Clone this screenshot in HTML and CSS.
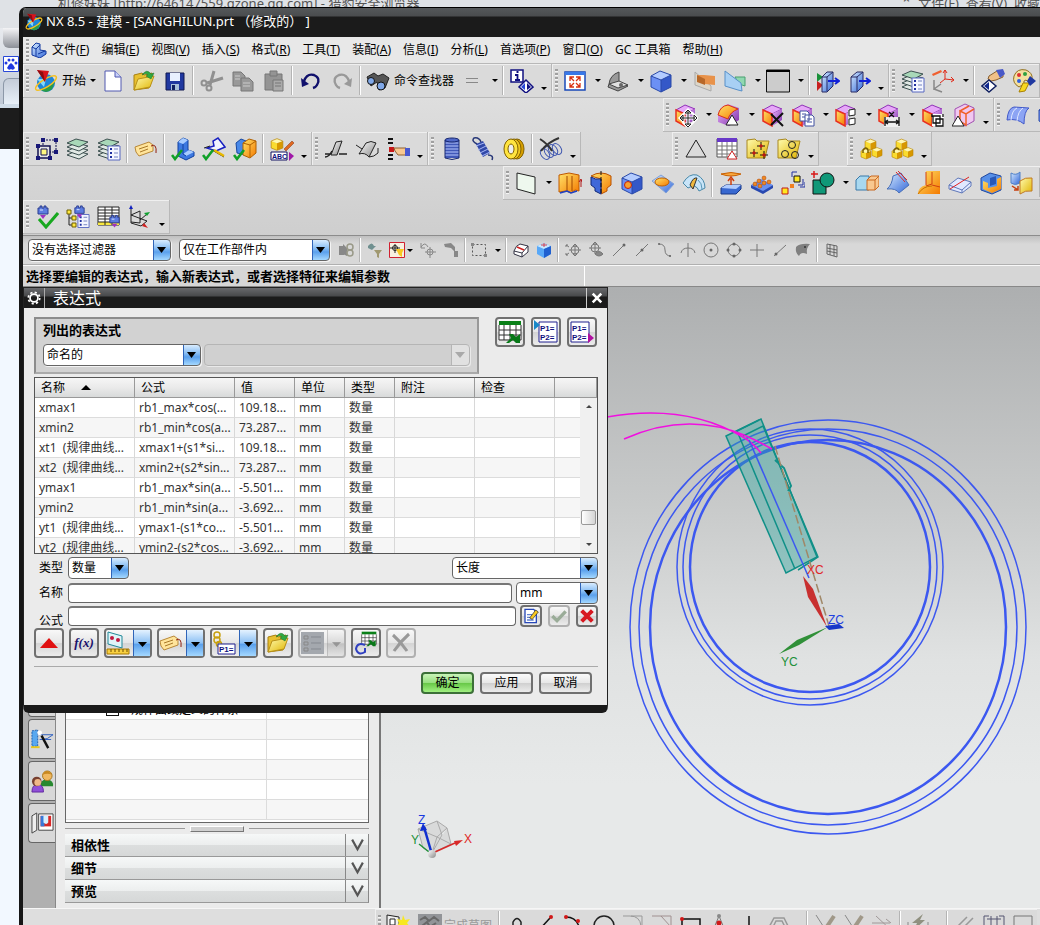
FILE: index.html
```
<!DOCTYPE html>
<html lang="zh-CN">
<head>
  <meta charset="utf-8">
  <title>NX 8.5 - 建模</title>
  <link rel="stylesheet" href="styles.css">
</head>
<body>

<!-- shared icon parts -->
<svg class="defs" width="0" height="0">
  <defs>
    <linearGradient id="gY" x2="1" y2="1"><stop stop-color="#fffbb0"/><stop offset="1" stop-color="#e0b400"/></linearGradient>
    <linearGradient id="gB" x2="1" y2="1"><stop stop-color="#d8ecff"/><stop offset="1" stop-color="#3468d8"/></linearGradient>
    <linearGradient id="gO" x2="1" y2="1"><stop stop-color="#ffe36a"/><stop offset="1" stop-color="#f47a00"/></linearGradient>
    <linearGradient id="gP" x2="1" y2="1"><stop stop-color="#f0b8ff"/><stop offset="1" stop-color="#7a2ca8"/></linearGradient>
    <linearGradient id="gG" x2="1" y2="1"><stop stop-color="#fff"/><stop offset="1" stop-color="#888"/></linearGradient>
    <symbol id="logo" viewBox="0 0 24 24">
      <circle cx="12" cy="14" r="9" fill="#1c86d8"/>
      <path d="M6 20q6 6 12 0l3-7q-6 6-15 7z" fill="#2a9c48"/>
      <path d="M3 10l7 8 2-8z" fill="#80d8ff"/>
      <ellipse cx="12" cy="14" rx="12" ry="4" transform="rotate(-32 12 14)" fill="none" stroke="#f4c020" stroke-width="1.500"/>
      <path d="M3 1l12 1-4 11z" fill="#d8141c"/><path d="M3 1l8 12-2-10z" fill="#8c0c10"/>
    </symbol>
    <symbol id="cube" viewBox="0 0 24 24">
      <path d="M2 7l9-5 10 4-10 5z" fill="#e6a8f8" stroke="#9030b8"/>
      <path d="M11 11l10-5v11l-10 6z" fill="url(#gP)"/>
      <path d="M2 7l9 4v12l-9-5z" fill="url(#gO)" stroke="#e83020" stroke-width="1.500"/>
    </symbol>
    <symbol id="box" viewBox="0 0 24 24">
      <path d="M2 7l9-5 11 4-10 5z" fill="#b4ccff"/><path d="M2 7l10 4v12l-10-5z" fill="#6c90f4"/><path d="M12 11l10-5v12l-10 5z" fill="#3458c8"/>
      <path d="M2 7l9-5 11 4v12l-10 5-10-5zl10 4v12M12 11l10-5" stroke="#2848a8" fill="none"/>
    </symbol>
    <symbol id="ybox" viewBox="0 0 12 12">
      <path d="M1 3l5-2 5 2-5 2z" fill="#fff8b0"/><path d="M1 3l5 2v6l-5-2z" fill="#fadc30"/><path d="M6 5l5-2v6l-5 2z" fill="#d89800"/>
      <path d="M1 3l5-2 5 2v6l-5 2-5-2z" stroke="#b88400" stroke-width=".6" fill="none"/>
    </symbol>
    <symbol id="layers" viewBox="0 0 24 24">
      <g fill="#e0e8e4" stroke="#3c5050"><path d="M1 18l9-4 12 3-9 5z"/><path d="M1 14l9-4 12 3-9 5z"/><path d="M1 10l9-4 12 3-9 5z"/><path d="M1 6l9-4 12 3-9 5z" fill="#a8d8b8"/></g>
    </symbol>
    <symbol id="list" viewBox="0 0 14 16">
      <path d="M1 1h12v14h-12z" fill="#f4f6ff" stroke="#5868c0"/><path d="M3 4h2M3 8h2M3 12h2" stroke="#2030a0" stroke-width="2"/><path d="M7 4h4M7 8h4M7 12h4" stroke="#7080c0"/>
    </symbol>
    <symbol id="tag" viewBox="0 0 24 24">
      <path d="M1 10l14-5 4 3v6l-14 5-3-4z" fill="#ffe49a" stroke="#b88838"/><path d="M5 12l9-3M6 15l8-3" stroke="#a87828"/><path d="M17 9q6-3 5 7" fill="none" stroke="#902010"/>
    </symbol>
    <symbol id="folder" viewBox="0 0 24 24">
      <path d="M2 21V6l8-2 2 2 8-2v5l-3 10z" fill="#e8c030" stroke="#a88010"/><path d="M2 21l4-11 16-3-4 11z" fill="url(#gY)" stroke="#b89018"/><path d="M10 6q5-7 9-1l3-1-3 6-5-3 2-1q-2-3-6 0z" fill="#30a840" stroke="#187028" stroke-width=".5"/>
    </symbol>
    <symbol id="check" viewBox="0 0 12 12"><path d="M1 6l3 4 7-9" stroke="#10a028" stroke-width="2.600" fill="none"/></symbol>
    <symbol id="camera" viewBox="0 0 14 14"><path d="M2 3h2v-2h2v2h2v-2h2v2h2v6h-10z" fill="#5c7ce0" stroke="#2a3c90"/><path d="M4 10h6l-3 4z" fill="#a030c0"/><path d="M4 5h3" stroke="#d8e4ff"/></symbol>
    <symbol id="grid" viewBox="0 0 24 24"><path d="M1 1h22v18h-22z" fill="#fff"/><path d="M1 1h22v4h-22z" fill="#0a8018"/><path d="M1 5v15h22v-15M1 10h22M1 15h22M6 5v15M12 5v15M18 5v15" stroke="#333" fill="none"/><path d="M11 14h4l3 3 4-3v9h-4l-3-3-4 3h-3l5-5z" fill="#087818"/></symbol>
    <symbol id="xbig" viewBox="0 0 24 24"><path d="M4 4q8 7 14 16M20 3q-8 7-15 17" stroke="currentColor" stroke-width="3" fill="none"/></symbol>
  </defs>
</svg>

<!-- browser window behind NX -->
<div class="browser">
  <div class="browser-title"><span>机修妹妹 [http://646147559.qzone.qq.com] - 猎豹安全浏览器</span><span class="browser-menu">⌃&nbsp; 文件(F)&nbsp; 查看(V)&nbsp; 收藏</span></div>
  <div class="browser-side">
    <div class="side-avatar"></div>
    <svg class="paw" viewBox="0 0 16 16"><path d="M.5.5h15v15H.5z" fill="#fff" stroke="#2848d8"/><path d="M8 7q3 2 4 5-2 3-4 1-2 2-4-1 1-3 4-5z" fill="#2038e0"/><circle cx="3" cy="7" r="1.500" fill="#2038e0"/><circle cx="6" cy="4" r="1.500" fill="#2038e0"/><circle cx="10" cy="4" r="1.500" fill="#2038e0"/><circle cx="13" cy="7" r="1.500" fill="#2038e0"/></svg>
    <div class="side-tab"></div>
    <div class="side-black"></div>
  </div>
</div>

<div class="nx">
  <header class="titlebar"><svg class="logo"><use href="#logo"/></svg><h1>NX 8.5 - 建模 - [SANGHILUN.prt （修改的） ]</h1></header>

  <nav class="menubar">
    <i class="grip"></i>
    <svg class="menu-logo" viewBox="0 0 16 16"><path d="M1 5l4-4 4 1v6l6 1v3l-6 4-8-3z" fill="url(#gB)" stroke="#1238a0"/><path d="M1 5l4 2v7M5 7l4-4M7 12l7-3" stroke="#1238a0" fill="none"/></svg>
    <a href="#">文件(<u>F</u>)</a><a href="#">编辑(<u>E</u>)</a><a href="#">视图(<u>V</u>)</a><a href="#">插入(<u>S</u>)</a><a href="#">格式(<u>R</u>)</a><a href="#">工具(<u>T</u>)</a><a href="#">装配(<u>A</u>)</a><a href="#">信息(<u>I</u>)</a><a href="#">分析(<u>L</u>)</a><a href="#">首选项(<u>P</u>)</a><a href="#">窗口(<u>O</u>)</a><a href="#">GC 工具箱</a><a href="#">帮助(<u>H</u>)</a>
  </nav>

  <div class="row">
    <div class="toolbar">
      <i class="grip"></i>
      <button class="tool text drop start"><svg><use href="#logo"/></svg>开始</button>
      <button class="tool" aria-label="新建"><svg viewBox="0 0 24 24"><path d="M4 2h10l6 6v14H4z" fill="#fff" stroke="#5058b0"/><path d="M14 2v6h6" fill="#c8d0f8" stroke="#5058b0"/></svg></button>
      <button class="tool" aria-label="打开"><svg><use href="#folder"/></svg></button>
      <button class="tool" aria-label="保存"><svg viewBox="0 0 24 24"><path d="M3 4h18v17H3z" fill="#2038a0" stroke="#101850"/><path d="M7 4h10v8H7z" fill="#e8f0ff"/><path d="M8 15h8v6H8z" fill="#a8c0d8"/><path d="M9 16h3v5H9z" fill="#102060"/></svg></button>
      <i class="sep"></i>
      <button class="tool" aria-label="剪切"><svg viewBox="0 0 24 24" stroke="#909090" stroke-width="2"><path d="M14 2l-4 14M23 9L7 14" stroke-width="3"/><circle cx="9" cy="19" r="2.500"/><circle cx="4" cy="14" r="2.500"/></svg></button>
      <button class="tool" aria-label="复制"><svg viewBox="0 0 24 24"><g fill="#999" stroke="#777"><path d="M2 3h8l4 4v10H2z"/><path d="M10 9h8l4 4v9H10z"/><path d="M4 7h5M4 10h5M12 14h7M12 17h7" stroke="#ccc"/></g></svg></button>
      <button class="tool" aria-label="粘贴"><svg viewBox="0 0 24 24"><g fill="#949494" stroke="#777"><path d="M3 5h17v16H3z"/><path d="M8 2h7v5H8z"/><path d="M11 11h10v11H11z" fill="#aaa"/><path d="M13 14h6M13 17h6"/></g></svg></button>
      <i class="sep"></i>
      <button class="tool" aria-label="撤消"><svg viewBox="0 0 24 24"><path d="M5 12q3-8 10-6 7 3 3 10-1 2-4 3" stroke="#10106c" stroke-width="2.400"/><path d="M2 9l1 9 7-3z" fill="#10106c"/></svg></button>
      <button class="tool" aria-label="重做"><svg viewBox="0 0 24 24"><path d="M19 12q-3-8-10-6-7 3-3 10 1 2 4 3" stroke="#999" stroke-width="2.400"/><path d="M22 9l-1 9-7-3z" fill="#999"/></svg></button>
      <i class="sep"></i>
      <button class="tool text finder"><svg viewBox="0 0 24 24"><path d="M1 8l7-4 4 3 5-2 6 4-4 10-6 2-2-8-6 4z" fill="#555" stroke="#222"/><circle cx="5" cy="12" r="3.500" fill="#80a8e8" stroke="#111"/><circle cx="15" cy="17" r="4" fill="#80a8e8" stroke="#111"/></svg>命令查找器</button>
      <button class="tool drop" aria-label="等号"><svg viewBox="0 0 24 24"><path d="M6 9.500h12M6 13.500h12" stroke="#888"/></svg></button>
      <i class="sep"></i>
      <button class="tool" aria-label="信息"><svg viewBox="0 0 24 24"><path d="M1 1h12v12H1z" fill="#fff" stroke="#101080" stroke-width="1.500"/><path d="M5 6h2.500v5M5 11h5M6.500 3h2" stroke="#101080" stroke-width="1.800"/><path d="M16 11l7 7-7 6-7-6z" fill="#fff" stroke="#101080" stroke-width="1.500"/><path d="M15 14v7l-4-3z" fill="#2848d8"/><path d="M17 14v7l4-3z" fill="#101080"/></svg></button>
      <button class="more" aria-label="更多"></button>
    </div>
    <div class="toolbar">
      <i class="grip"></i>
      <button class="tool drop" aria-label="适合窗口"><svg viewBox="0 0 24 24"><path d="M2 3h20v18H2z" fill="#fff" stroke="#1848b8" stroke-width="1.500"/><path d="M2 3h20v3H2z" fill="#3878e8"/><path d="M7 12V8h4M13 8h4v4M7 14v4h4M17 14v4h-4M7 8l4 4M17 8l-4 4M7 18l4-4M17 18l-4-4" stroke="#d83010" stroke-width="1.300"/></svg></button>
      <button class="tool drop" aria-label="定向"><svg viewBox="0 0 24 24"><path d="M3 15q1-9 10-12v10l9 4-10 5-10-4z" fill="#999" stroke="#444"/><path d="M3 15l10-3 9 4-10 3z" fill="#e0e0e0" stroke="#444"/><circle cx="15" cy="16" r="2" fill="#666"/></svg></button>
      <button class="tool drop" aria-label="着色"><svg><use href="#box"/></svg></button>
      <button class="tool" aria-label="剖切"><svg viewBox="0 0 24 24"><path d="M2 3l16 14v5L2 16z" fill="#ddd6c8" stroke="#aaa"/><path d="M4 6h7l11 1v9l-10-1z" fill="#e8924a"/><path d="M4 6l8 4v6l-8-3z" fill="#b86828"/></svg></button>
      <button class="tool drop" aria-label="编辑剖切"><svg viewBox="0 0 24 24"><path d="M12 8h10v9l-6-2z" fill="#90d8b0" stroke="#48a070"/><path d="M2 2l16 12 1 8-4-1L2 17z" fill="#a8d0f4" stroke="#5890c8"/></svg></button>
      <button class="tool drop" aria-label="背景"><svg viewBox="0 0 24 24"><path d="M.5 1h23v22H.5z" fill="#ccc" stroke="#111"/><path d="M0 1h24v2H0z" fill="#000"/></svg></button>
      <i class="sep"></i>
      <button class="tool" aria-label="裁剪"><svg viewBox="0 0 24 24"><path d="M1 4l6 4-6 5z" fill="#189038"/><path d="M1 12l6 4-6 6z" fill="#c82020"/><path d="M6 8l5-5h6v14l-6 6H6z" fill="url(#gB)" stroke="#282860"/><path d="M11 8v14M11 8l6-5M6 8h5" stroke="#282860"/><path d="M12 12h10M19 9l4 3-4 3" stroke="#1020d8" stroke-width="2"/></svg></button>
      <button class="tool" aria-label="移动面"><svg viewBox="0 0 24 24"><path d="M4 8l6-5h6v14l-6 6H4z" fill="url(#gB)" stroke="#282860"/><path d="M10 8v14M10 8l6-5M4 8h6" stroke="#282860"/><path d="M12 12h10M19 9l4 3-4 3" stroke="#1020d8" stroke-width="2"/></svg></button>
      <button class="more" aria-label="更多"></button>
    </div>
    <div class="toolbar">
      <i class="grip"></i>
      <button class="tool" aria-label="图层设置"><svg viewBox="0 0 24 24"><use href="#layers"/><use href="#list" x="10" y="8" width="14" height="16"/></svg></button>
      <button class="tool drop" aria-label="坐标系"><svg viewBox="0 0 24 24"><path d="M1 5l9-4 1 2-9 4z" fill="#f06030"/><path d="M14 1v9l-5 4M14 10l9 1M12 4l2-3 2 3M20 8l3 3-3 2" stroke="#e02818"/><path d="M3 11v10M3 20l7-5M3 20l8 3" stroke="#888" stroke-width="1.500"/></svg></button>
      <i class="sep"></i>
      <button class="tool" aria-label="对象显示"><svg viewBox="0 0 24 24"><path d="M8 7l8-5h6v6l-7 3-5 1-3-2z" fill="#f0c088" stroke="#886030"/><path d="M15 1l7-1 2 5-5 4z" fill="#4858c8"/><path d="M8 11l7 6-7 6-7-6z" fill="#fff" stroke="#102060" stroke-width="1.500"/><path d="M8 13v8l-5-4z" fill="#102890"/></svg></button>
      <button class="tool" aria-label="真实着色"><svg viewBox="0 0 24 24"><path d="M2 7q3-8 12-6 7 3 6 9-4 4-6 1-3 0-2 4l-5 3q-7-4-5-11z" fill="#f4e0a0" stroke="#907020"/><circle cx="7" cy="6" r="2" fill="#e03030"/><circle cx="13" cy="5" r="2" fill="#30a040"/><circle cx="7" cy="12" r="2" fill="#3060e0"/><path d="M11 14h6l-4 8-6 1z" fill="#f8d820" stroke="#a88000"/><path d="M18 7l6 5-6 5-3-5z" fill="#2038a0"/></svg></button>
    </div>
  </div>

  <div class="row">
    <div class="toolbar sync">
      <i class="grip"></i>
      <button class="tool drop" aria-label="移动面"><svg viewBox="0 0 24 24"><use href="#cube"/><path d="M14 8v14M7 15h14M14 7l-3 3h6zM14 24l-3-3h6zM6 15l3-3v6zM23 15l-3-3v6z" stroke="#fff" stroke-width="3"/><path d="M14 8v14M7 15h14M14 7l-3 3h6zM14 24l-3-3h6zM6 15l3-3v6zM23 15l-3-3v6z" stroke="#222"/></svg></button>
      <button class="tool drop" aria-label="拉出面"><svg viewBox="0 0 24 24"><path d="M1 12q2-9 10-11l11 4v12l-10 6-11-4z" fill="url(#gP)"/><path d="M1 12q2-9 10-10l10 4q-8 3-10 10z" fill="url(#gO)" stroke="#d83018"/><path d="M15 12l6 10H9z" fill="#fff" stroke="#222"/></svg></button>
      <button class="tool" aria-label="删除面"><svg viewBox="0 0 24 24"><use href="#cube"/><path d="M10 11l12 12M22 10L10 22" stroke="#111" stroke-width="2"/></svg></button>
      <button class="tool drop" aria-label="复制面"><svg viewBox="0 0 24 24"><use href="#cube"/><path d="M9 8h7l2 2v8H9zM14 12h7l2 2v9h-9z" fill="#fff" stroke="#4050a0"/><path d="M11 11h4M11 14h3M16 16h5M16 19h5" stroke="#4050a0"/></svg></button>
      <button class="tool drop" aria-label="设为共面"><svg viewBox="0 0 24 24"><use href="#cube"/><path d="M14 6h7v16h-7z" fill="#ddd"/><path d="M15 7l6-1v6l-6 1zM15 16l6-1v6l-6 1z" fill="#fff" stroke="#222"/></svg></button>
      <button class="tool drop" aria-label="线性尺寸"><svg viewBox="0 0 24 24"><use href="#cube"/><path d="M7 14h16v10H7z" fill="#eee"/><path d="M8 14v9M22 14v9M8 19h14M11 17l-3 2 3 2M19 17l3 2-3 2M12 9l5 5M17 9l-5 5" stroke="#111" stroke-width="1.300"/></svg></button>
      <button class="tool" aria-label="组合面"><svg viewBox="0 0 24 24"><use href="#cube"/><path d="M11 11h12v12H11z" fill="#fff"/><path d="M12 13h7v7h-7zM15 16h7v7h-7zM11 11v3M22 11v3" stroke="#111" stroke-width="1.300"/></svg></button>
      <button class="tool" aria-label="局部比例"><svg viewBox="0 0 24 24"><path d="M3 6l10-5 9 4v13l-9 5-10-5z" fill="#f0c8f0" stroke="#a050b0"/><path d="M8 8l9-5M14 11v11l-6-4V8l6 3 8-5" stroke="#f06028" stroke-width="1.500"/><path d="M6 13l6 10H0z" fill="#fff" stroke="#222"/></svg></button>
      <button class="more" aria-label="更多"></button>
    </div>
    <div class="toolbar">
      <i class="grip"></i>
      <button class="tool" aria-label="曲面"><svg viewBox="0 0 24 24"><path d="M1 17Q2 5 8 4l15 1q-5 3-5 16-7-6-17-4z" fill="#8ca4f4" stroke="#4058c8"/><path d="M5 17q1-10 6-12M11 18q1-10 6-13" stroke="#e0e8ff"/></svg></button>
      <button class="tool" aria-label="曲面加厚"><svg><use href="#box"/></svg></button>
    </div>
  </div>

  <div class="row">
    <div class="toolbar">
      <i class="grip"></i>
      <button class="tool" aria-label="布局"><svg viewBox="0 0 24 24"><path d="M8 3h13v12H8z" stroke="#101050" stroke-dasharray="2 1"/><path d="M3 9h12v12H3z" fill="#e4e4e4" stroke="#101050" stroke-width="1.500"/><path d="M6 12h6v6H6z" fill="#fff880" stroke="#101050"/><path d="M6 1h4v4H6zM19 1h4v4h-4zM19 13h4v4h-4zM1 7h4v4H1zM1 19h4v4H1zM13 19h4v4h-4z" fill="#181878"/></svg></button>
      <button class="tool" aria-label="图层"><svg><use href="#layers"/></svg></button>
      <button class="tool" aria-label="图层列表"><svg viewBox="0 0 24 24"><use href="#layers"/><use href="#list" x="10" y="8" width="14" height="16"/></svg></button>
      <i class="sep"></i>
      <button class="tool" aria-label="特征标签"><svg><use href="#tag"/></svg></button>
      <i class="sep"></i>
      <button class="tool" aria-label="检查部件"><svg viewBox="0 0 24 24"><path d="M7 5l5-4 5 2v10l6 2v4l-8 4-8-4z" fill="#3c78e0" stroke="#1040a0"/><path d="M7 5l5-4 5 2-5 4zM12 17l6-4 5 2-8 4z" fill="#a8ccff"/><path d="M12 7v10l3 2" stroke="#1040a0"/><use href="#check" x="0" y="12" width="12" height="12"/></svg></button>
      <button class="tool" aria-label="检查装配"><svg viewBox="0 0 24 24"><path d="M5 11l7-2-1-5 5-3 7 9-9 4z" fill="#f0f4ff" stroke="#1820c0" stroke-width="1.500"/><path d="M2 11l6-2M10 13l12 7" stroke="#222"/><path d="M12 13l10 6" stroke="#e8b800" stroke-width="2.500"/><use href="#check" x="0" y="12" width="12" height="12"/></svg></button>
      <button class="tool" aria-label="检查工装"><svg viewBox="0 0 24 24"><path d="M3 6l5-4 5 2v14l-9-2z" fill="#4888e8" stroke="#1848a0"/><path d="M10 6l6-4 7 2v12l-6 5-7-3z" fill="url(#gO)" stroke="#b06000"/><path d="M10 6l7 2v12M17 8l6-4" stroke="#b06000"/><use href="#check" x="0" y="12" width="12" height="12"/></svg></button>
      <i class="sep"></i>
      <button class="tool" aria-label="属性"><svg viewBox="0 0 24 24"><use href="#ybox" x="0" y="0" width="14" height="15"/><path d="M14 12l8-8 2 2-8 8z" fill="#e06820" stroke="#803010" stroke-width=".5"/><path d="M1 15h16v8H1z" fill="#fff" stroke="#101060"/><path d="M19 15l5 4-5 5z" fill="#a018a8"/><text x="2" y="22" class="tiny">ABC</text></svg></button>
      <button class="more" aria-label="更多"></button>
    </div>
    <div class="toolbar">
      <i class="grip"></i>
      <button class="tool" aria-label="约束"><svg viewBox="0 0 24 24"><path d="M1 17h6M15 17h8M1 20q4 0 7-6" stroke="#222" stroke-width="1.500"/><path d="M12 5l6-1-5 14H7z" fill="url(#gG)" stroke="#222"/></svg></button>
      <button class="tool" aria-label="面约束"><svg viewBox="0 0 24 24"><path d="M4 17l7-11q5-3 10 0L14 20q-4-5-10-3z" fill="url(#gG)" stroke="#222"/><path d="M1 8l6 4M23 11v5q-4 4-9 4" stroke="#222"/></svg></button>
      <button class="tool" aria-label="选择"><svg viewBox="0 0 24 24"><path d="M2 2h5M2 6h5M2 18h5M2 22h5" stroke="#111" stroke-width="2"/><path d="M3 10h5v5H3z" fill="#c81818"/><path d="M8 11h12v7h-8l-3-4z" fill="#f8c890" stroke="#906030"/><path d="M19 11h5v8h-5z" fill="#4858d0"/></svg></button>
      <button class="more" aria-label="更多"></button>
    </div>
    <div class="toolbar">
      <i class="grip"></i>
      <button class="tool" aria-label="圆柱弹簧"><svg viewBox="0 0 24 24"><path d="M5 3h14v18H5z" fill="#4058b8"/><path d="M5 6h14M5 9h14M5 12h14M5 15h14M5 18h14" stroke="#b8c8ff"/><ellipse cx="12" cy="3" rx="7" ry="2" fill="#5068c8" stroke="#182870"/><path d="M5 3v18q7 3 14 0V3" stroke="#182870"/></svg></button>
      <button class="tool" aria-label="拉伸弹簧"><svg viewBox="0 0 24 24"><path d="M5 7l7-3 7 12-7 4z" fill="#3048a8"/><path d="M5 9l8-3M7 13l8-4M9 16l8-4M11 19l8-4" stroke="#a8b8f8"/><path d="M6 7Q0 4 3 1q5-1 7 4M17 18q6 0 4 5" stroke="#283878" stroke-width="1.500"/></svg></button>
      <button class="tool" aria-label="碟形弹簧"><svg viewBox="0 0 24 24"><ellipse cx="15" cy="12" rx="7" ry="10" fill="#d8a000" stroke="#806000"/><ellipse cx="12" cy="12" rx="7" ry="10" fill="#f0c820" stroke="#806000"/><ellipse cx="9" cy="12" rx="7" ry="10" fill="#ffe440" stroke="#806000"/><ellipse cx="9" cy="12" rx="3" ry="5" fill="#eee" stroke="#806000"/></svg></button>
      <i class="sep"></i>
      <button class="tool" aria-label="删除弹簧"><svg viewBox="0 0 24 24" stroke="#4058b0"><ellipse cx="6" cy="17" rx="4" ry="6" transform="rotate(-35 6 17)"/><ellipse cx="10" cy="15" rx="4" ry="6" transform="rotate(-35 10 15)"/><ellipse cx="14" cy="13" rx="4" ry="6" transform="rotate(-35 14 13)"/><ellipse cx="18" cy="12" rx="4" ry="6" transform="rotate(-35 18 12)"/><path d="M1 2q8 5 12 12M20 1Q9 5 2 14" stroke="#333" stroke-width="2"/></svg></button>
      <button class="more" aria-label="更多"></button>
    </div>
    <div class="toolbar shapes">
      <i class="grip"></i>
      <button class="tool" aria-label="三角形"><svg viewBox="0 0 24 24"><path d="M12 3l10 17H2z" stroke="#222"/></svg></button>
      <button class="tool" aria-label="表格"><svg viewBox="0 0 24 24"><path d="M2 2h20v18H2z" fill="#fff" stroke="#555"/><path d="M2 1h20v4H2z" fill="#6838c8"/><path d="M2 9h20M2 13h20M2 17h20M7 5v15M12 5v15M17 5v15" stroke="#777"/><path d="M17 14l5 8H12z" fill="#fff" stroke="#d02020"/></svg></button>
      <button class="tool" aria-label="点集"><svg viewBox="0 0 24 24"><path d="M1 3l8-1 2 2h12l-4 17H1z" fill="url(#gY)" stroke="#a88820"/><path d="M15 5v8M11 9h8M8 12v8M4 16h8M18 14v8M14 18h8" stroke="#111"/><path d="M14 8h2v2h-2zM7 15h2v2H7zM17 17h2v2h-2z" stroke="#e01010"/></svg></button>
      <button class="tool" aria-label="圆集"><svg viewBox="0 0 24 24"><path d="M1 3l8-1 2 2h12l-4 17H1z" fill="url(#gY)" stroke="#a88820"/><g stroke="#222"><circle cx="15" cy="8" r="3.500"/><circle cx="8" cy="17" r="3.500"/><circle cx="18" cy="18" r="3.500"/></g></svg></button>
      <button class="more" aria-label="更多"></button>
    </div>
    <div class="toolbar blocks">
      <i class="grip"></i>
      <button class="tool" aria-label="装配块"><svg viewBox="0 0 24 24"><use href="#ybox" x="5" y="1" width="13" height="13"/><use href="#ybox" x="12" y="9" width="12" height="13"/><use href="#ybox" x="1" y="11" width="12" height="12"/><path d="M4 16v-3q3-4 5 0v3" stroke="#786000" stroke-width="1.500"/></svg></button>
      <button class="tool" aria-label="装配块组"><svg viewBox="0 0 24 24"><use href="#ybox" x="5" y="1" width="13" height="13"/><use href="#ybox" x="12" y="9" width="12" height="13"/><use href="#ybox" x="1" y="11" width="12" height="12"/><path d="M4 16v-3q3-4 5 0" stroke="#786000" stroke-width="1.500"/></svg></button>
      <button class="more" aria-label="更多"></button>
    </div>
  </div>

  <div class="row">
    <div class="toolbar feature">
      <i class="grip"></i>
      <button class="tool drop" aria-label="基准平面"><svg viewBox="0 0 24 24"><path d="M3 2l18 4v17L3 18z" fill="#eef8ee" stroke="#222"/></svg></button>
      <button class="tool" aria-label="拉伸"><svg viewBox="0 0 24 24"><path d="M1 4l10-2 10 2v16l-4-1-4 3-5-2-7 1z" fill="url(#gO)" stroke="#c05800"/><path d="M9 5v15M14 5v15" stroke="#a04800"/><path d="M2 22l7-2 4 2 6-2" stroke="#2040c0" stroke-width="1.500"/><path d="M23 16V9M21 11l2-3 1 3" stroke="#b01818"/></svg></button>
      <button class="tool" aria-label="回转"><svg viewBox="0 0 24 24"><path d="M2 5q10-6 20 0v9l-4 3v3l-6 3V8z" fill="url(#gO)" stroke="#b85000"/><path d="M2 6q4 3 10 2v15l-6-3v-3l-4-3z" fill="#4068d8" stroke="#102878"/><path d="M12 0v24" stroke="#111" stroke-dasharray="4 2"/></svg></button>
      <button class="tool" aria-label="孔"><svg viewBox="0 0 24 24"><use href="#box"/><circle cx="8" cy="14" r="3.500" fill="#f8a030" stroke="#c02010"/></svg></button>
      <button class="tool" aria-label="凸台"><svg viewBox="0 0 24 24"><path d="M1 10l9-6 13 9-8 9z" fill="url(#gB)" stroke="#80a0d8"/><ellipse cx="11" cy="11" rx="7" ry="4" fill="url(#gO)" stroke="#c06000"/></svg></button>
      <button class="tool" aria-label="扫掠"><svg viewBox="0 0 24 24"><path d="M1 12Q7 2 15 4q8 4 8 13l-6 3q-3-8-11-3z" fill="#c8e4f8" stroke="#4888a8"/><path d="M8 14q3-8 7-7l-4 11z" fill="#f0b840" stroke="#333"/><path d="M16 9q4 3 4 9" stroke="#5898b8"/></svg></button>
      <i class="sep"></i>
      <button class="tool" aria-label="偏置面"><svg viewBox="0 0 24 24"><path d="M2 17l5-3h15v4l-5 5H2z" fill="#3868d0" stroke="#183888"/><path d="M2 17l5-3h15l-5 4z" fill="#b0ccff"/><path d="M2 3q10-3 20 0-10 4-20 0z" fill="#f8a840" stroke="#c86000"/><path d="M12 14V8M9 10l3-4 3 4" stroke="#d04010" stroke-width="1.500"/></svg></button>
      <button class="tool" aria-label="阵列面"><svg viewBox="0 0 24 24"><path d="M1 14l10-6 12 6-10 7z" fill="#6890f0"/><path d="M1 14v3l12 6 10-6v-3l-10 6z" fill="#2848b0"/><g fill="#f08820" stroke="#a84000" stroke-width=".5"><circle cx="5" cy="13" r="2"/><circle cx="9" cy="10" r="2"/><circle cx="10" cy="15" r="2"/><circle cx="14" cy="12" r="2"/><circle cx="14" cy="7" r="2"/><circle cx="19" cy="11" r="2"/></g></svg></button>
      <button class="tool" aria-label="阵列特征"><svg viewBox="0 0 24 24"><path d="M1 17h6v6H1z" fill="#ffe820" stroke="#c01818"/><path d="M9 13h4v4H9z" fill="#f08020"/><path d="M13 5h6v6h-6z" fill="#ffe820" stroke="#111"/><path d="M11 6V1h5M22 8v6h-5M24 11v5h-5" stroke="#2030a0"/></svg></button>
      <button class="tool drop" aria-label="求和"><svg viewBox="0 0 24 24"><path d="M2 9h13v14H2z" fill="#109878" stroke="#111"/><circle cx="16" cy="9" r="7" fill="#109878" stroke="#111"/><path d="M3 0v7M0 3h7" stroke="#d81818" stroke-width="1.500"/></svg></button>
      <button class="tool" aria-label="修剪体"><svg viewBox="0 0 24 24"><path d="M1 9l4-4h9v14H1z" fill="#a8d8f0" stroke="#3878a8"/><path d="M12 9l4-4h8v10l-4 4h-8z" fill="#f8c890" stroke="#c86820"/><path d="M12 9h8v10M20 9l4-4" stroke="#c86820"/></svg></button>
      <button class="tool" aria-label="拔模"><svg viewBox="0 0 24 24"><path d="M1 18q5-4 6-13l8-3 8 12-10 8q-3-5-12-4z" fill="url(#gB)" stroke="#4870b8"/><path d="M10 1l9 10M12 0l9 9" stroke="#d82828"/></svg></button>
      <button class="tool" aria-label="边倒圆"><svg viewBox="0 0 24 24"><path d="M9 0h14v23H1q0-7 8-9z" fill="url(#gO)"/><path d="M15 1v12l-6 2M15 14l8 2M9 14v-13" stroke="#d04010"/><path d="M1 23q5-8 14-8" stroke="#c87000"/></svg></button>
      <button class="tool" aria-label="倒斜角"><svg viewBox="0 0 24 24"><path d="M1 14l9-7 13 4v4l-9 7-13-4z" fill="#e0e8ff" stroke="#6078b8"/><path d="M1 14l13 5 9-8M14 19v3" stroke="#6078b8"/><path d="M2 18L21 6" stroke="#e02020"/></svg></button>
      <button class="tool" aria-label="抽壳"><svg viewBox="0 0 24 24"><path d="M2 7l9-5 11 3v14l-9 4-11-4z" fill="#5890e8" stroke="#2048a0"/><path d="M4 10l5 2v5l9-2V8l4-2v12l-9 4-9-4z" fill="url(#gO)"/><path d="M11 7l6-2v8l-6 2z" fill="#2858b8"/></svg></button>
      <button class="tool" aria-label="替换面"><svg viewBox="0 0 24 24"><path d="M1 2q5 3 9-1v11q-5 3-9 0z" fill="url(#gB)" stroke="#5080c8"/><path d="M10 10q5-4 12-3v13q-7-1-12 3z" fill="url(#gY)" stroke="#c07820"/><path d="M2 15l6 4M8 15v4H4" stroke="#c84010" stroke-width="1.500"/></svg></button>
      <i class="sep"></i>
    </div>
  </div>

  <div class="row">
    <div class="toolbar">
      <i class="grip"></i>
      <button class="tool" aria-label="检查工具"><svg viewBox="0 0 24 24"><use href="#camera" x="1" y="0" width="14" height="14"/><path d="M4 14l7 8L23 8" stroke="#18a820" stroke-width="3"/></svg></button>
      <button class="tool" aria-label="结构树"><svg viewBox="0 0 24 24"><path d="M3 6v14M3 13h5M3 20h5" stroke="#222"/><path d="M1 5h4v4H1zM6 11h4v4H6zM6 18h4v4H6z" fill="#ffe840" stroke="#706000"/><use href="#list" x="11" y="8" width="13" height="16"/><use href="#camera" x="7" y="0" width="13" height="13"/></svg></button>
      <button class="tool" aria-label="数据表"><svg viewBox="0 0 24 24"><path d="M1 2h21v18H1z" fill="#fff" stroke="#222"/><path d="M1 17h21v3H1z" fill="#f8e840"/><path d="M1 5h21M1 8h21M1 11h21M1 14h21M1 17h21M8 2v18M15 2v18" stroke="#222"/><use href="#camera" x="11" y="9" width="13" height="14"/></svg></button>
      <button class="tool" aria-label="坐标方向"><svg viewBox="0 0 24 24"><path d="M3 3v15l10 3 6-5-16-6M3 10l9-4v12l-9-1M12 15l7-6" stroke="#222"/><path d="M3 0l-2 4h4z" fill="#1020c0"/><path d="M22 7l-6 1 3 3z" fill="#10a030"/><path d="M20 23l-6-2 2-3z" fill="#d02020"/></svg></button>
      <button class="more" aria-label="更多"></button>
    </div>
  </div>

  <div class="selection">
    <select class="combo filter" aria-label="选择过滤器"><option>没有选择过滤器</option></select>
    <select class="combo scope" aria-label="选择范围"><option>仅在工作部件内</option></select>
    <button class="tool small" aria-label="复位"><svg viewBox="0 0 16 16"><path d="M1 4h5v9H1zM5 2l4 4v8l-4-2z" fill="#888"/><circle cx="12" cy="5" r="3" stroke="#998" stroke-width="1.500"/><circle cx="12" cy="11" r="3" stroke="#998" stroke-width="1.500"/></svg></button>
    <i class="sep"></i>
    <button class="tool small" aria-label="过滤"><svg viewBox="0 0 16 16"><path d="M1 4q4-5 6 0l2 0-4 4-4-2z" fill="#709090"/><path d="M7 8h8l-3 4v4l-2-1v-3z" fill="#a09870"/></svg></button>
    <button class="tool small drop" aria-label="捕捉"><svg viewBox="0 0 16 16"><path d="M.5.5h15v15H.5z" fill="#f8f0e0" stroke="#d02030"/><path d="M6 2v9M1 6h10" stroke="#222"/><circle cx="6" cy="6" r="2.500" stroke="#222"/><path d="M7 7h8l-2 4v4l-3-2z" fill="#f8c820"/></svg></button>
    <button class="tool small" aria-label="旋转"><svg viewBox="0 0 16 16" stroke="#888"><path d="M1 5q4-6 7 0M1 1v5h4"/><circle cx="10" cy="10" r="3"/><path d="M10 5v11M5 10h11"/></svg></button>
    <button class="tool small" aria-label="锤"><svg viewBox="0 0 16 16"><path d="M1 2l7-1 4 4v4h3v6h-4V9l-3-3-6-1z" fill="#888"/></svg></button>
    <i class="sep"></i>
    <button class="tool small drop wide" aria-label="矩形选择"><svg viewBox="0 0 16 16"><path d="M1.500 2.500h13v11h-13z" stroke="#555" stroke-dasharray="2 2"/><path d="M0 1h3v3H0zM13 12h3v3h-3z" fill="#888"/></svg></button>
    <i class="sep"></i>
    <button class="tool small" aria-label="线框"><svg viewBox="0 0 16 16"><path d="M1 9q2-6 6-7l8 2v6l-6 5-8-3z" fill="#fff" stroke="#334"/><path d="M1 9l8 2 6-7M9 11v4" stroke="#334"/><path d="M4 5l7 3" stroke="#d02020" stroke-width="1.500"/></svg></button>
    <button class="tool small" aria-label="实体"><svg viewBox="0 0 16 16"><path d="M1 4l7-3 7 3v8l-7 4-7-4z" fill="#58a8f8"/><path d="M1 4l7-3 7 3-7 3z" fill="#c8e8ff"/><path d="M8 7l7-3v8l-7 4z" fill="#2060d0"/><path d="M8 1v4M5 3h6" stroke="#d04050"/></svg></button>
    <i class="sep"></i>
    <button class="tool small" aria-label="启用捕捉"><svg viewBox="0 0 16 16" stroke="#777"><circle cx="10" cy="8" r="4"/><path d="M10 2v12M4 8h12M1 3l3 2M1 13l3-2M1 5v-2h2M1 11v2h2M8 4l2-2 2 2M8 12l2 2 2-2"/></svg></button>
    <button class="tool small" aria-label="清除捕捉"><svg viewBox="0 0 16 16" stroke="#777"><circle cx="7" cy="6" r="4"/><path d="M7 0v12M1 6h12M5 2l2-2 2 2"/><path d="M7 12q4-5 8 0-4 4-8 0z" fill="#888"/></svg></button>
    <button class="tool small" aria-label="端点"><svg viewBox="0 0 16 16"><path d="M2 14L13 3" stroke="#777"/><circle cx="13" cy="3" r="1.500" fill="#666"/></svg></button>
    <button class="tool small" aria-label="中点"><svg viewBox="0 0 16 16"><path d="M2 14L14 2" stroke="#777"/><circle cx="8" cy="8" r="1.500" fill="#666"/></svg></button>
    <button class="tool small" aria-label="控制点"><svg viewBox="0 0 16 16"><path d="M2 2q6 0 6 6t6 6" stroke="#777"/><circle cx="2" cy="2" r="1" fill="#666"/><circle cx="13" cy="14" r="1" fill="#666"/></svg></button>
    <button class="tool small" aria-label="交点"><svg viewBox="0 0 16 16"><path d="M1 11q1-5 7-5t7 5M8 1v14" stroke="#777"/></svg></button>
    <button class="tool small" aria-label="圆心"><svg viewBox="0 0 16 16"><circle cx="8" cy="8" r="7" stroke="#777"/><circle cx="8" cy="8" r="1.500" fill="#666"/></svg></button>
    <button class="tool small" aria-label="象限点"><svg viewBox="0 0 16 16"><circle cx="8" cy="8" r="6" stroke="#777"/><g fill="#666"><circle cx="8" cy="2" r="1.500"/><circle cx="8" cy="14" r="1.500"/><circle cx="2" cy="8" r="1.500"/><circle cx="14" cy="8" r="1.500"/></g></svg></button>
    <button class="tool small" aria-label="现有点"><svg viewBox="0 0 16 16"><path d="M8 2v13M1 8h14" stroke="#777"/></svg></button>
    <button class="tool small" aria-label="曲线上点"><svg viewBox="0 0 16 16"><path d="M2 14L14 3" stroke="#777"/><circle cx="4" cy="12" r="1.500" fill="#666"/></svg></button>
    <button class="tool small" aria-label="面上点"><svg viewBox="0 0 16 16"><path d="M1 5q4-4 14-3-4 4-3 10-6-3-8 2-4-3-3-9z" fill="#808080"/><circle cx="10" cy="5" r="1" fill="#333"/></svg></button>
    <i class="sep"></i>
    <button class="tool small" aria-label="栅格"><svg viewBox="0 0 16 16"><path d="M3 2l10 2v11L3 12zM6 2v11M10 3v11M3 6l10 2M3 9l10 2" stroke="#666"/></svg></button>
  </div>

  <div class="cue"><p>选择要编辑的表达式，输入新表达式，或者选择特征来编辑参数</p><p class="status"></p></div>

  <main>
    <aside class="rail">
      <button aria-label="历史"></button>
      <button aria-label="加工向导"><svg viewBox="0 0 24 24"><path d="M1 3l6-1v17H1z" fill="#58a8f0" stroke="#2060b0" stroke-dasharray="2 1"/><path d="M8 7h15l-6 4-6 1M9 12h12" stroke="#3060c0"/><path d="M11 8l7 13" stroke="#111" stroke-width="2.500"/><path d="M0 20h9" stroke="#e8c820" stroke-width="2"/><circle cx="9" cy="5" r="2.500" fill="#fff"/></svg></button>
      <button aria-label="角色"><svg viewBox="0 0 24 24"><path d="M10 17q0-8 7-7t6 7z" fill="#288830"/><circle cx="17" cy="6" r="5" fill="#f0b860" stroke="#a87820"/><path d="M12 5q4-8 10 0-5-2-10 0z" fill="#c88820"/><path d="M1 23q0-8 6-8t6 8z" fill="#9050d8" stroke="#6028a0"/><circle cx="6" cy="12" r="5" fill="#784030"/><circle cx="7" cy="13" r="3.500" fill="#f0b888"/></svg></button>
      <button aria-label="系统场景"><svg viewBox="0 0 24 24"><path d="M1 4l5-3v18l-5 3z" fill="#eee" stroke="#444"/><path d="M8 2h15v17H8z" fill="#fff" stroke="#444"/><path d="M10 4h11v11H10z" fill="#d82828"/><path d="M10 4h4v11h-4z" fill="#3878d8"/><path d="M13 4h5v7q-2 3-5 0z" fill="#d8f0ff"/></svg></button>
    </aside>
    <section class="navigator">
      <div class="tree">
        <div class="tree-row"><label><input type="checkbox" checked> 规律曲线定义的样条</label><span></span></div>
        <div class="tree-row"><span></span><span></span></div>
        <div class="tree-row"><span></span><span></span></div>
        <div class="tree-row"><span></span><span></span></div>
        <div class="tree-row"><span></span><span></span></div>
        <div class="tree-row"><span></span><span></span></div>
      </div>
      <div class="splitter"><i></i></div>
      <button class="fold">相依性<svg viewBox="0 0 14 14"><path d="M2 2l5 9 5-9" stroke="#555" stroke-width="2"/></svg></button>
      <button class="fold">细节<svg viewBox="0 0 14 14"><path d="M2 2l5 9 5-9" stroke="#555" stroke-width="2"/></svg></button>
      <button class="fold">预览<svg viewBox="0 0 14 14"><path d="M2 2l5 9 5-9" stroke="#555" stroke-width="2"/></svg></button>
    </section>
    <section class="viewport">
      <!-- gear blank, tool and coordinate systems -->
      <svg class="scene" width="658" height="620" viewBox="382 287 658 620">
        <g stroke="#3c58f0">
          <ellipse cx="829" cy="627" rx="198" ry="207" stroke-width="1.500"/>
          <ellipse cx="829" cy="627" rx="189" ry="198" stroke-width="1.500"/>
          <ellipse cx="829" cy="627" rx="178" ry="187" stroke-width="2.500"/>
          <ellipse cx="811" cy="567" rx="133" ry="138" stroke-width="1.500"/>
          <ellipse cx="811" cy="567" rx="127" ry="132" stroke-width="1.500"/>
          <ellipse cx="811" cy="567" rx="120" ry="125" stroke-width="2.500"/>
        </g>
        <path d="M727 436l35-17 56 138-31 16z" fill="#2aa8a0" fill-opacity=".4" stroke="#109088" stroke-width="1.500"/>
        <path d="M738 431l58 138M738 431l22-11M744 436l20-10 55 131-20 13" stroke="#109088" stroke-width="1.500"/>
        <path d="M776 460l9 8 7 18-3 5" stroke="#109088" stroke-width="2"/>
        <path d="M608 417q78-14 136 20 10 6 18 16M625 439q62-28 120-4 14 6 28 14" stroke="#f010e0" stroke-width="1.500"/>
        <path d="M750 440l60 138" stroke="#3c58f0" stroke-width="1.500"/>
        <path d="M776 446l54 180" stroke="#a08868" stroke-width="1.500" stroke-dasharray="9 3"/>
        <path d="M804 576l10 13 14 38-19-30z" fill="#c83030"/>
        <path d="M780 654l18-14 31-13-29 18z" fill="#309038"/>
        <path d="M826 626l14-2 5 4-15 2z" fill="#1838c8"/>
        <text x="808" y="574" fill="#e02828">XC</text>
        <text x="829" y="624" fill="#2040e0">ZC</text>
        <text x="782" y="666" fill="#209038">YC</text>
        <path d="M419 829l19-8 10 7 4 16-19 9-9-5zM419 829l19 8 14 7M438 821l5 14-10 18M448 828l-10 9-5 16" fill="#ccc" fill-opacity=".5" stroke="#aaa"/>
        <path d="M432 851l-7-24" stroke="#1030d0" stroke-width="2.500"/><path d="M424 823l-3 8 7-1z" fill="#1030d0"/>
        <path d="M436 852l20-9" stroke="#d82828" stroke-width="1.500"/><path d="M464 840l-9 1 2 5z" fill="#d82828"/>
        <path d="M430 852l-10-8" stroke="#209038" stroke-width="1.500"/>
        <circle cx="433" cy="854" r="4" fill="url(#gG)"/>
        <text x="419" y="824" fill="#1838e0">Z</text><text x="412" y="844" fill="#209038">Y</text><text x="465" y="843" fill="#e02828">X</text>
      </svg>
    </section>
  </main>

  <footer class="row bottom">
    <div class="toolbar sketch">
      <i class="grip"></i>
      <button class="tool" aria-label="草图"><svg viewBox="0 0 24 24"><path d="M1 1l12 2v14L1 14z" fill="#eee" stroke="#222"/><path d="M4 5h5v6H4z" fill="#fff" stroke="#222"/><path d="M17 1l2 5 5-1-3 4 3 4-5 0-2 5-2-5-5 0 3-4-2-4 5 1z" fill="#f8e820"/></svg></button>
      <button class="tool text finish" disabled><svg viewBox="0 0 24 24"><path d="M0 0h24v20H0z" fill="#929498"/><path d="M2 6l5-3 4 4 5-4 5 4M4 12l5-4 3 5 6-4" stroke="#686868" stroke-width="2"/></svg>完成草图</button>
      <i class="sep"></i>
      <button class="tool" aria-label="轮廓"><svg viewBox="0 0 24 24"><path d="M8 16V8q4-7 8 0v8" stroke="#222" stroke-width="1.500"/></svg></button>
      <button class="tool" aria-label="直线"><svg viewBox="0 0 24 24"><path d="M5 16L16 4" stroke="#111" stroke-width="1.500"/><circle cx="17" cy="3" r="2" fill="#d01818"/></svg></button>
      <button class="tool" aria-label="圆弧"><svg viewBox="0 0 24 24"><path d="M3 3q12 0 14 14" stroke="#111" stroke-width="1.500"/><circle cx="3" cy="3" r="2" fill="#d01818"/><circle cx="15" cy="7" r="2" fill="#d01818"/></svg></button>
      <button class="tool" aria-label="圆"><svg viewBox="0 0 24 24"><circle cx="12" cy="12" r="10" stroke="#222" stroke-width="1.500"/></svg></button>
      <button class="tool" aria-label="圆角"><svg viewBox="0 0 24 24"><path d="M2 2h7q10 0 11 10v10M10 2h11v10" stroke="#999"/></svg></button>
      <button class="tool" aria-label="倒斜角"><svg viewBox="0 0 24 24"><path d="M2 2h9l10 11v9M11 2h10v11" stroke="#a09090"/></svg></button>
      <button class="tool" aria-label="矩形"><svg viewBox="0 0 24 24"><path d="M3 5h18v14H3z" stroke="#111" stroke-width="1.500"/><circle cx="3" cy="5" r="2" fill="#d01818"/></svg></button>
      <button class="tool" aria-label="样条"><svg viewBox="0 0 24 24"><path d="M6 14l5-12 5 12" stroke="#777"/><circle cx="11" cy="2" r="2" fill="#888"/><circle cx="11" cy="9" r="2.500" fill="#d01818"/></svg></button>
      <button class="tool" aria-label="点"><svg viewBox="0 0 24 24"><path d="M12 2v20M2 12h20" stroke="#111" stroke-width="1.500"/></svg></button>
      <button class="tool drop" aria-label="偏置曲线"><svg viewBox="0 0 24 24"><path d="M2 15L8 4h10l4 8M6 15l4-8h6l3 6" stroke="#999" stroke-width="1.500"/></svg></button>
      <i class="sep"></i>
      <button class="tool" aria-label="修剪"><svg viewBox="0 0 24 24"><path d="M3 1l9 14" stroke="#888"/><path d="M21 2l-8 12" stroke="#a09888" stroke-width="4"/></svg></button>
      <button class="tool" aria-label="延伸"><svg viewBox="0 0 24 24"><path d="M3 1l9 14" stroke="#888"/><path d="M20 2l-8 12" stroke="#a09888" stroke-width="4"/></svg></button>
      <button class="tool" aria-label="拐角"><svg viewBox="0 0 24 24"><path d="M5 2l15 14M1 9h18M15 5l5 4" stroke="#a09898"/></svg></button>
      <i class="sep"></i>
      <button class="tool drop" aria-label="尺寸"><svg viewBox="0 0 24 24"><path d="M17 0L6 9h5l-3 7 11-10h-5z" fill="#909080"/><path d="M2 8v12M22 8v12" stroke="#888"/></svg></button>
      <i class="sep"></i>
      <button class="tool" aria-label="平行约束"><svg viewBox="0 0 24 24"><path d="M2 15L14 3M9 15L20 4" stroke="#999" stroke-width="1.500"/></svg></button>
      <button class="tool" aria-label="约束显示"><svg viewBox="0 0 24 24"><path d="M2 2v17h20V2M5 5h14M9 2v10M15 2v10M2 2h5M17 2h5" stroke="#555570"/></svg></button>
      <button class="tool" aria-label="对称约束"><svg viewBox="0 0 24 24"><path d="M3 2v17h18V2z" stroke="#777"/></svg></button>
    </div>
  </footer>
</div>

<form class="dialog">
  <div class="dialog-title">
    <svg class="gear" viewBox="0 0 16 16"><circle cx="8" cy="8" r="4.500" stroke="#fff" stroke-width="2"/><circle cx="8" cy="8" r="6.500" stroke="#fff" stroke-width="2" stroke-dasharray="2.500 2.600"/></svg>
    <h2>表达式</h2>
    <button type="button" class="close" aria-label="关闭"><svg viewBox="0 0 14 14"><path d="M2 2l10 10M12 2L2 12" stroke="#fff" stroke-width="3"/></svg></button>
  </div>

  <div class="dialog-body">
    <div class="list-head">
      <fieldset>
        <label for="listed">列出的表达式</label>
        <div class="pair">
          <select class="combo listed" id="listed"><option>命名的</option></select>
          <select class="combo off" disabled aria-label="过滤条件"><option></option></select>
        </div>
      </fieldset>
      <button type="button" class="push" aria-label="电子表格编辑"><svg><use href="#grid"/></svg></button>
      <button type="button" class="push" aria-label="导入"><svg viewBox="0 0 24 24"><path d="M5 2h18v20H5z" fill="#fff" stroke="#202090"/><path d="M0 0l6 5-6 5z" fill="#1888c8"/><text x="6" y="11">P1=</text><text x="6" y="20">P2=</text></svg></button>
      <button type="button" class="push" aria-label="导出"><svg viewBox="0 0 24 24"><path d="M1 2h18v20H1z" fill="#fff" stroke="#202090"/><path d="M18 13l6 5-6 5z" fill="#b010a0"/><text x="2" y="11">P1=</text><text x="2" y="20">P2=</text></svg></button>
    </div>

    <div class="grid">
      <table>
        <colgroup><col class="c100"><col class="c100"><col class="c60"><col class="c50"><col class="c50"><col class="c80"><col class="c80"><col></colgroup>
        <thead><tr><th class="sorted">名称</th><th>公式</th><th>值</th><th>单位</th><th>类型</th><th>附注</th><th>检查</th><th></th></tr></thead>
        <tbody>
          <tr><td>xmax1</td><td>rb1_max*cos(...</td><td>109.18...</td><td>mm</td><td>数量</td><td></td><td></td><td></td></tr>
          <tr><td>xmin2</td><td>rb1_min*cos(a...</td><td>73.287...</td><td>mm</td><td>数量</td><td></td><td></td><td></td></tr>
          <tr><td>xt1&nbsp; (规律曲线...</td><td>xmax1+(s1*si...</td><td>109.18...</td><td>mm</td><td>数量</td><td></td><td></td><td></td></tr>
          <tr><td>xt2&nbsp; (规律曲线...</td><td>xmin2+(s2*sin...</td><td>73.287...</td><td>mm</td><td>数量</td><td></td><td></td><td></td></tr>
          <tr><td>ymax1</td><td>rb1_max*sin(a...</td><td>-5.501...</td><td>mm</td><td>数量</td><td></td><td></td><td></td></tr>
          <tr><td>ymin2</td><td>rb1_min*sin(a...</td><td>-3.692...</td><td>mm</td><td>数量</td><td></td><td></td><td></td></tr>
          <tr><td>yt1&nbsp; (规律曲线...</td><td>ymax1-(s1*co...</td><td>-5.501...</td><td>mm</td><td>数量</td><td></td><td></td><td></td></tr>
          <tr><td>yt2&nbsp; (规律曲线...</td><td>ymin2-(s2*cos...</td><td>-3.692...</td><td>mm</td><td>数量</td><td></td><td></td><td></td></tr>
        </tbody>
      </table>
      <div class="scrollbar"><i class="up"></i><i class="thumb"></i><i class="down"></i></div>
    </div>

    <div class="field">
      <label for="kind">类型</label>
      <select class="combo kind" id="kind"><option>数量</option></select>
      <select class="combo measure" aria-label="量纲"><option>长度</option></select>
    </div>
    <div class="field">
      <label for="name">名称</label>
      <input type="text" id="name">
      <select class="combo unit" aria-label="单位"><option>mm</option></select>
    </div>
    <div class="field formula">
      <label for="formula">公式</label>
      <input type="text" id="formula">
      <div class="minis">
        <button type="button" class="push mini" aria-label="编辑公式"><svg viewBox="0 0 24 24"><path d="M3 2h13l4 4v16H3z" fill="#fff" stroke="#2848b8" stroke-width="2"/><path d="M6 10h8M6 14h8M6 18h10" stroke="#6080d0" stroke-width="2"/><path d="M10 15l9-12 4 3-9 11z" fill="#f8c820" stroke="#222"/></svg></button>
        <button type="button" class="push mini" disabled aria-label="接受"><svg viewBox="0 0 24 24"><path d="M2 12l7 7L22 5" stroke="#9aac98" stroke-width="5"/></svg></button>
        <button type="button" class="push mini" aria-label="拒绝"><svg viewBox="0 0 24 24"><path d="M4 4l16 16M20 4L4 20" stroke="#d81820" stroke-width="6"/></svg></button>
      </div>
    </div>

    <div class="tools">
      <button type="button" class="push" aria-label="更少选项"><svg viewBox="0 0 24 24"><path d="M12 7l9 10H3z" fill="#e01010"/></svg></button>
      <button type="button" class="push" aria-label="函数"><em>f(x)</em></button>
      <button type="button" class="push split" aria-label="测量距离"><svg viewBox="0 0 24 24"><path d="M2 1l14 4v12L2 13z" fill="#e0f4f8" stroke="#208898"/><circle cx="6" cy="7" r="2" fill="#c01840"/><circle cx="12" cy="9" r="2" fill="#c01840"/><path d="M1 18h22v5H1z" fill="#f8d040" stroke="#a87800"/><path d="M5 18v3M9 18v3M13 18v3M17 18v3M21 18v3" stroke="#705000"/></svg></button>
      <button type="button" class="push split" aria-label="特征参数"><svg><use href="#tag"/></svg></button>
      <button type="button" class="push split" aria-label="部件间链接"><svg viewBox="0 0 24 24"><g stroke="#c8a010" stroke-width="1.500"><circle cx="5" cy="4" r="3"/><circle cx="5" cy="9" r="3"/><circle cx="7" cy="13" r="2.500"/></g><path d="M6 13h17v10H6z" fill="#fff" stroke="#202090"/><text x="7" y="21">P1=</text></svg></button>
      <button type="button" class="push" aria-label="打开部件"><svg><use href="#folder"/></svg></button>
      <button type="button" class="push split" disabled aria-label="列表"><svg viewBox="0 0 24 24"><path d="M1 1h23v22H1z" fill="#a4a8ae"/><path d="M4 5h4v3H4zM4 11h4v3H4zM4 17h4v3H4z" stroke="#888"/><path d="M11 6h10M11 12h10M11 18h10" stroke="#858990"/></svg></button>
      <button type="button" class="push" aria-label="刷新值"><svg viewBox="0 0 24 24"><use href="#grid" x="6" y="0" width="18" height="16"/><path d="M11 14q-8-3-9 4 2 7 9 3v-4" stroke="#3040c0" stroke-width="2"/></svg></button>
      <button type="button" class="push gray" disabled aria-label="删除"><svg><use href="#xbig"/></svg></button>
    </div>

    <div class="actions">
      <button type="submit" class="ok">确定</button>
      <button type="button">应用</button>
      <button type="button">取消</button>
    </div>
  </div>
</form>

</body>
</html>
```
FILE: styles.css
```
* {
  box-sizing: border-box;
}

body {
  margin: 0;
  height: 100vh;
  overflow: hidden;
  position: relative;
  background: #f2f8ff;
  font: 12px/16px "Noto Sans", "Noto Sans CJK SC", sans-serif;
  color: #000;
}

button, input, select {
  font: inherit;
  color: inherit;
  margin: 0;
  padding: 0;
}

h1, h2, p, fieldset {
  margin: 0;
  padding: 0;
  font-weight: normal;
}

svg {
  fill: none;
  flex: none;
}

.defs {
  position: absolute;
}

/* browser behind */
.browser-title {
  display: flex;
  height: 28px;
  padding-left: 58px;
  background: #dfe2e6;
  color: #555;
  font-size: 13px;
  line-height: 6px;
  white-space: nowrap;
}

.browser-menu {
  margin-left: auto;
}

.browser-side {
  display: flex;
  flex-direction: column;
  width: 24px;
  background: linear-gradient(#e8eaee, #b4c0d0 100px, #f2f8ff 150px);
}

.side-avatar {
  height: 20px;
  margin: 0 0 8px 3px;
  border-radius: 0 0 0 6px;
  background: linear-gradient(#f4f4f6, #8c9098);
}

.paw {
  width: 16px;
  height: 16px;
  margin-left: 3px;
}

.side-tab {
  height: 26px;
  margin: 6px 0 0 3px;
  border: 1px solid #8c98a8;
  border-bottom: 0;
  border-radius: 6px 0 0 0;
  background: linear-gradient(#c4ccd8, #e8f0f8);
}

.side-black {
  height: 45px;
  border-top: 4px solid #d0dce8;
  background: #1c1c1c;
}

/* NX window */
.nx {
  position: absolute;
  inset: 7px 0 0 19px;
  display: flex;
  flex-direction: column;
  overflow: hidden;
  border-left: 4px solid #161616;
  border-top: 1px solid #000;
  border-radius: 7px 0 0 0;
  background: linear-gradient(#dedede 90px, #cecece 230px);
}

.titlebar {
  display: flex;
  align-items: center;
  flex: none;
  height: 29px;
  background: linear-gradient(#55585a, #4a4c4e 8px, #1b1b1b 9px, #1b1b1b);
  color: #fff;
}

.titlebar h1 {
  font-size: 13px;
  white-space: pre;
  padding-bottom: 3px;
}

.logo {
  width: 18px;
  height: 18px;
  margin: 0 3px 2px 2px;
}

.grip {
  flex: none;
  align-self: center;
  width: 3px;
  height: 23px;
  margin: 0 2px 0 3px;
  background: repeating-linear-gradient(#a0a0a0 0 2px, #f4f4f4 2px 3px, transparent 3px 4px);
}

.menubar {
  display: flex;
  align-items: center;
  flex: none;
  height: 27px;
  background: #e8e8e8;
  border-bottom: 1px solid #b8b8b8;
  white-space: nowrap;
}

.menubar a {
  margin-right: 12px;
  color: #000;
  text-decoration: none;
}

.menu-logo {
  width: 16px;
  height: 16px;
  margin-right: 5px;
}

.row {
  display: flex;
  flex: none;
  height: 34px;
}

.toolbar {
  display: flex;
  flex: none;
  align-items: center;
  border: 1px solid #b8b8b8;
  border-width: 0 1px 1px 0;
  box-shadow: inset 1px 1px 0 #efefef;
  background: #dadada;
}

.sync { margin-left: 640px; }
.shapes { margin-left: 91px; }
.blocks { margin-left: 28px; }
.feature { margin-left: 480px; }

.tool {
  display: flex;
  flex: none;
  align-items: center;
  justify-content: center;
  width: 31px;
  height: 31px;
  border: 0;
  background: none;
}

.tool svg {
  width: 24px;
  height: 24px;
}

.tool text, .push text {
  font: bold 8px "Liberation Sans", sans-serif;
  fill: #101080;
}

.tool .tiny {
  font-size: 7px;
}

.text {
  width: auto;
  white-space: nowrap;
  gap: 4px;
}

.drop {
  width: 43px;
  justify-content: flex-start;
  padding-left: 3px;
}

.drop::after, .more::after {
  content: "";
  margin-left: 8px;
  border: 3px solid transparent;
  border-top-color: #000;
  border-bottom: 0;
}

.start {
  width: 66px;
}

.start::after {
  margin-left: 0;
}

.finder {
  width: 94px;
}

.more {
  display: flex;
  align-items: flex-end;
  flex: none;
  width: 14px;
  height: 25px;
  padding-bottom: 3px;
  border: 0;
  background: none;
}

.more::after {
  margin-left: 4px;
}

.sep {
  flex: none;
  align-self: stretch;
  width: 2px;
  margin: 2px;
  border-left: 1px solid #b4b4b4;
  background: #fff;
}

/* selection bar */
.selection {
  display: flex;
  align-items: center;
  flex: none;
  height: 30px;
  margin-top: 1px;
  padding-left: 5px;
  border-top: 1px solid #8c8c8c;
  border-bottom: 1px solid #b0b0b0;
  background: linear-gradient(#c0c0c0, #d8d8d8 8px, #d8d8d8);
}

.small {
  width: 23px;
}

.small svg {
  width: 16px;
  height: 16px;
}

.small.drop {
  width: 30px;
}

.small.drop::after {
  margin-left: 2px;
}

.small.wide {
  width: 35px;
}

.small.wide::after {
  margin-left: 8px;
}

.combo {
  appearance: none;
  height: 22px;
  padding: 0 22px 0 3px;
  border: 1px solid #666;
  border-radius: 4px;
  background:
    url("data:image/svg+xml,%3Csvg xmlns='http://www.w3.org/2000/svg' width='9' height='6'%3E%3Cpath d='M0 0h9L4.5 6z'/%3E%3C/svg%3E") no-repeat right 4px center,
    linear-gradient(#2f64b8 0 0) no-repeat right 16px center / 1px 100%,
    linear-gradient(#d8ecff, #8cc0f4 40%, #5aa0ec 60%, #a4d8ff) no-repeat right / 16px 100%,
    #fff;
  box-shadow: 1px 1px 0 #f4f4f4;
}

.filter { width: 143px; margin-right: 8px; }
.scope { width: 151px; margin-right: 4px; }

.cue {
  display: flex;
  flex: none;
  height: 22px;
  border-top: 1px solid #f8f8f8;
  border-bottom: 1px solid #888;
  background: #d6d6d6;
}

.cue p {
  flex: none;
  width: 561px;
  padding-left: 3px;
  font-size: 13px;
  font-weight: bold;
  line-height: 20px;
}

.cue .status {
  flex: 1;
  border-left: 1px solid #fff;
}

/* main area */
main {
  display: flex;
  flex: 1;
  min-height: 0;
}

.rail {
  display: flex;
  flex-direction: column;
  justify-content: flex-end;
  align-items: flex-end;
  gap: 2px;
  width: 32px;
  padding-bottom: 65px;
  background: #b0b0b0;
}

.rail button {
  display: flex;
  align-items: center;
  justify-content: center;
  width: 27px;
  height: 40px;
  border: 1px solid #666;
  border-right: 0;
  border-radius: 4px 0 0 4px;
  background: #d8d8d8;
}

.rail svg {
  width: 23px;
  height: 23px;
}

.navigator {
  display: flex;
  flex-direction: column;
  justify-content: flex-end;
  width: 326px;
  padding: 0 10px 5px 9px;
  border-left: 1px solid #888;
  border-right: 2px solid #777;
  background: #ebebeb;
}

.tree {
  border: 1px solid #666;
  border-top: 0;
  background: #fff;
  padding-bottom: 2px;
}

.tree-row {
  display: grid;
  grid-template-columns: 2fr 1fr;
  height: 20px;
  border-bottom: 1px solid #dcdcdc;
}

.tree-row:nth-child(even) {
  background: #f6f6f6;
}

.tree-row > :first-child {
  display: flex;
  align-items: center;
  gap: 12px;
  padding-left: 40px;
  border-right: 1px solid #dcdcdc;
}

.tree-row input {
  appearance: none;
  width: 13px;
  height: 13px;
  border: 1px solid #111;
  background: #fff;
}

.tree-row input:checked {
  background: linear-gradient(#2a8a30 0 0) no-repeat center / 5px 5px #fff;
}

.splitter {
  display: flex;
  align-items: center;
  justify-content: center;
  height: 11px;
  gap: 5px;
}

.splitter::before, .splitter::after {
  content: "";
  flex: 1;
  height: 1px;
  background: #999;
}

.splitter i {
  width: 54px;
  height: 6px;
  border: 1px solid #fff;
  border-right-color: #777;
  border-bottom-color: #777;
  background: #d0d0d0;
}

.fold {
  display: flex;
  align-items: center;
  justify-content: space-between;
  flex: none;
  height: 23px;
  padding: 0 3px 0 6px;
  border: 0;
  border-bottom: 1px solid #999;
  border-right: 1px solid #888;
  background: linear-gradient(#f6f8f8, #eceeee 50%, #dcdede 52%, #d6d8d8);
  font-size: 13px;
  font-weight: bold;
}

.fold svg {
  width: 20px;
  height: 22px;
  padding-left: 4px;
  border-left: 1px solid #888;
}

.viewport {
  flex: 1;
  min-width: 0;
  overflow: hidden;
  background: linear-gradient(#adafb0, #c8caca 35%, #e0e2e2 60%, #e7e9e9 80%);
}

.scene {
  display: block;
}

.scene text {
  font: 12px "Liberation Sans", sans-serif;
}

.bottom {
  height: 17px;
  overflow: hidden;
  border-top: 1px solid #f6f6f6;
  background: #dedede;
}

.sketch {
  height: 34px;
  margin-left: 352px;
  border: 0;
}

.sketch .tool {
  width: 29px;
}

.sketch .drop {
  width: 41px;
}

.sketch .finish {
  width: 82px;
  gap: 2px;
  margin-left: 2px;
  color: #999;
}

/* expressions dialog */
.dialog {
  position: absolute;
  left: 23px;
  top: 287px;
  width: 585px;
  border: 1px solid #222;
  border-bottom: 8px solid #1a1a1a;
  border-radius: 0 0 6px 6px;
  background: #ebebeb;
}

.dialog-title {
  display: flex;
  align-items: center;
  height: 20px;
  background: linear-gradient(#68696c, #48494b 8px, #1b1b1b 9px, #1b1b1b);
  color: #fff;
}

.dialog-title h2 {
  flex: 1;
  padding-left: 8px;
  border-left: 1px solid #aaa;
  font-size: 16px;
  line-height: 20px;
}

.gear {
  width: 14px;
  height: 14px;
  margin: 0 3px;
}

.close {
  display: flex;
  width: 21px;
  height: 20px;
  padding: 4px;
  border: 0;
  border-left: 1px solid #ccc;
  background: none;
}

.dialog-body {
  padding: 9px 9px 11px 10px;
}

.list-head {
  display: flex;
  gap: 6px;
  margin-bottom: 3px;
  padding-right: 1px;
}

fieldset {
  flex: 1;
  min-width: 0;
  height: 57px;
  margin-right: 10px;
  padding: 3px 7px;
  border: 2px solid;
  border-color: #8c8c8c #999 #aaa #8c8c8c;
  background: #d2d2d2;
}

fieldset label {
  display: block;
  height: 22px;
  font-size: 13px;
  font-weight: bold;
}

.pair {
  display: flex;
  gap: 3px;
}

.listed { width: 158px; }

.off {
  flex: 1;
  border-color: #aaa;
  background:
    url("data:image/svg+xml,%3Csvg xmlns='http://www.w3.org/2000/svg' width='10' height='6'%3E%3Cpath fill='%23999' d='M0 0h10L5 6z'/%3E%3C/svg%3E") no-repeat right 4px center,
    linear-gradient(#aaa 0 0) no-repeat right 17px center / 1px 100%,
    linear-gradient(#e8e8e8 0 0) no-repeat right / 17px 100%,
    #d0d0d0;
}

.push {
  display: flex;
  align-items: center;
  justify-content: center;
  flex: none;
  width: 30px;
  height: 30px;
  border: 2px solid #707070;
  border-radius: 4px;
  background: linear-gradient(#f8f8f8, #e6e6e6 50%, #d4d4d4 52%, #ececec);
}

.push svg {
  width: 24px;
  height: 24px;
}

.push em {
  color: #18106c;
  font: italic bold 13px "Liberation Serif", serif;
}

.push:disabled {
  border-color: #b0b0b0;
}

.gray {
  color: #999;
}

.split {
  width: 48px;
  justify-content: flex-start;
  gap: 3px;
}

.split::after {
  content: "";
  align-self: stretch;
  flex: 1;
  border-left: 1px solid #2f64b8;
  background:
    url("data:image/svg+xml,%3Csvg xmlns='http://www.w3.org/2000/svg' width='9' height='5'%3E%3Cpath d='M0 0h9L4.5 5z'/%3E%3C/svg%3E") no-repeat center 12px,
    linear-gradient(#e4f2ff, #8cc0f4 50%, #5aa0ec 55%, #a4d8ff);
}

.split:disabled::after {
  filter: grayscale(1) opacity(0.3);
}

.minis {
  display: flex;
  gap: 6px;
}

.mini {
  width: 22px;
  height: 22px;
}

.mini svg {
  width: 16px;
  height: 16px;
}

.grid {
  position: relative;
  height: 177px;
  overflow: hidden;
  border: 1px solid #555;
  background: #fff;
}

table {
  width: 100%;
  table-layout: fixed;
  border-collapse: separate;
  border-spacing: 0;
}

.c100 { width: 100px; }
.c60 { width: 60px; }
.c50 { width: 50px; }
.c80 { width: 80px; }

th, td {
  height: 20px;
  padding: 0 0 0 4px;
  border-right: 1px solid #d8d8d8;
  border-bottom: 1px solid #dcdcdc;
  line-height: 19px;
  text-align: left;
  font-weight: normal;
  white-space: nowrap;
  overflow: hidden;
}

th {
  padding-left: 6px;
  border-color: #999;
  background: linear-gradient(#f6f6f6, #eaeaea 50%, #d8dada);
}

td {
  color: #333;
}

tbody tr:nth-child(even) {
  background: #f6f6f6;
}

.sorted::after {
  content: "";
  display: inline-block;
  margin: 0 0 2px 16px;
  border: 5px solid transparent;
  border-top: 0;
  border-bottom-color: #000;
}

.scrollbar {
  position: absolute;
  inset: 20px 0 0 auto;
  display: flex;
  flex-direction: column;
  align-items: center;
  width: 17px;
  padding: 7px 0;
  background: #f0f0f0;
}

.up, .down {
  border: 3px solid transparent;
}

.up {
  border-top: 0;
  border-bottom-color: #444;
}

.down {
  border-bottom: 0;
  border-top-color: #444;
}

.thumb {
  width: 15px;
  height: 15px;
  margin: auto 0 18px;
  border: 1px solid #999;
  border-radius: 2px;
  background: linear-gradient(90deg, #fff, #d4d4d4);
}

.field {
  display: flex;
  align-items: center;
  height: 22px;
  margin-top: 3px;
  gap: 4px;
}

.field label {
  width: 30px;
  padding-left: 5px;
  white-space: nowrap;
}

.field input {
  flex: 1;
  min-width: 0;
  height: 20px;
  padding: 0 4px;
  border: 1px solid #666;
  border-top: 2px solid #777;
  border-radius: 4px;
  background: #fff;
}

.kind { width: 61px; }
.measure { width: 146px; margin-left: auto; }
.unit { width: 82px; }

.formula {
  margin-top: 1px;
}

.formula label {
  align-self: flex-end;
  line-height: 12px;
}

.tools {
  display: flex;
  gap: 5px;
  margin-top: 1px;
}

.actions {
  display: flex;
  justify-content: flex-end;
  gap: 6px;
  margin: 8px 0 0;
  padding: 5px 6px 0 0;
  border-top: 1px solid #aaa;
}

.actions button {
  width: 53px;
  height: 22px;
  border: 2px solid #707070;
  border-radius: 4px;
  background: linear-gradient(#fafafa, #e8e8e8 48%, #d0d0d0 52%, #ececec);
}

.actions .ok {
  border-color: #3c7038;
  background: linear-gradient(#c8f4b8, #98e080 48%, #68c848 52%, #a0f080);
}
```
